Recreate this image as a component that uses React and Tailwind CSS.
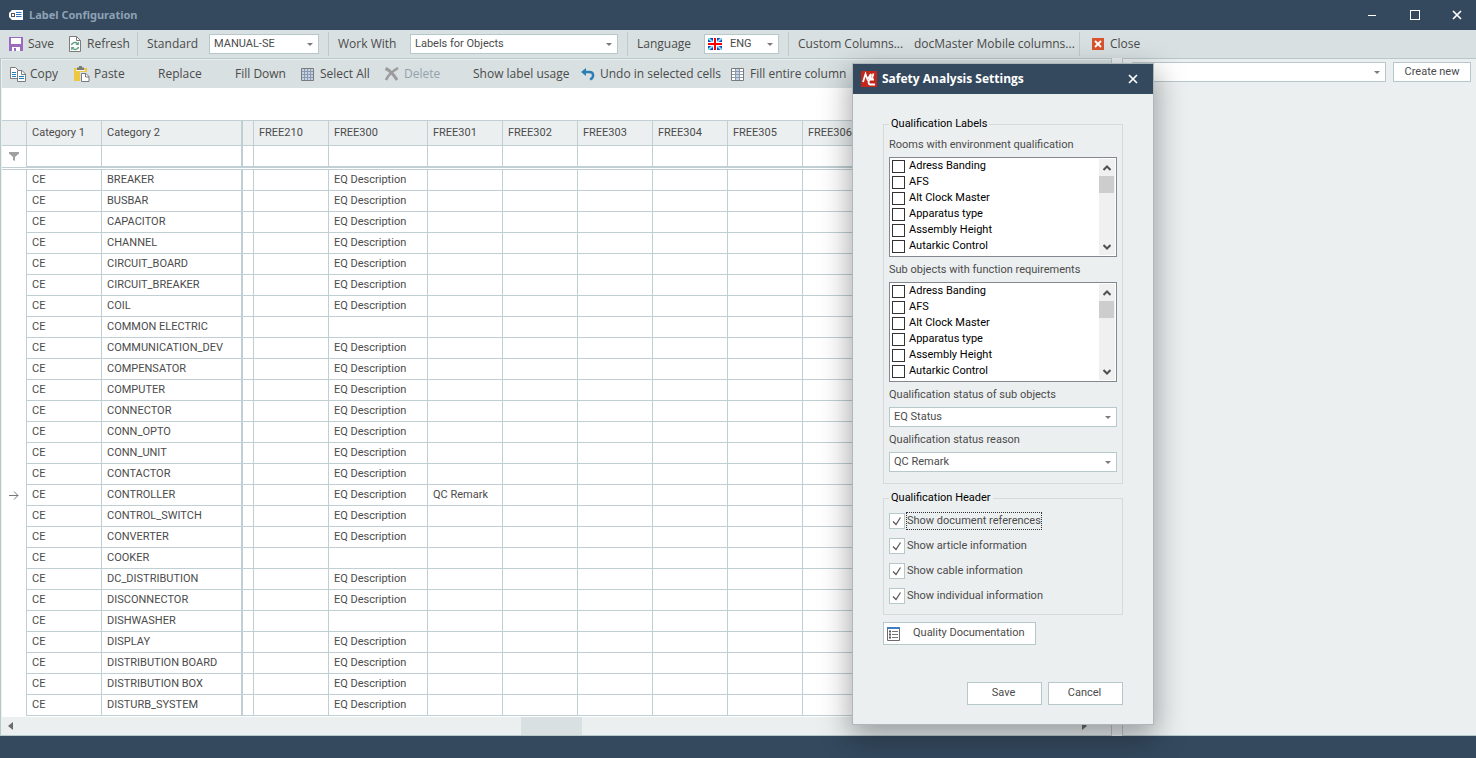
import { useState } from "react";
import clsx from "clsx";

const rows = [
  ["BREAKER", true],
  ["BUSBAR", true],
  ["CAPACITOR", true],
  ["CHANNEL", true],
  ["CIRCUIT_BOARD", true],
  ["CIRCUIT_BREAKER", true],
  ["COIL", true],
  ["COMMON ELECTRIC", false],
  ["COMMUNICATION_DEV", true],
  ["COMPENSATOR", true],
  ["COMPUTER", true],
  ["CONNECTOR", true],
  ["CONN_OPTO", true],
  ["CONN_UNIT", true],
  ["CONTACTOR", true],
  ["CONTROLLER", true],
  ["CONTROL_SWITCH", true],
  ["CONVERTER", true],
  ["COOKER", false],
  ["DC_DISTRIBUTION", true],
  ["DISCONNECTOR", true],
  ["DISHWASHER", false],
  ["DISPLAY", true],
  ["DISTRIBUTION BOARD", true],
  ["DISTRIBUTION BOX", true],
  ["DISTURB_SYSTEM", true],
];

const freeColumns = ["FREE301", "FREE302", "FREE303", "FREE304", "FREE305", "FREE306"];

const labelOptions = [
  "Adress Banding",
  "AFS",
  "Alt Clock Master",
  "Apparatus type",
  "Assembly Height",
  "Autarkic Control",
];

const headerOptions = [
  "Show document references",
  "Show article information",
  "Show cable information",
  "Show individual information",
];

function TagIcon() {
  return (
    <svg width="14" height="10" viewBox="0 0 14 10">
      <path d="M3 0h11v10H3L0 7V3z" fill="#fff" />
      <path d="M2 3h4v4H2z" fill="#555" />
      <path d="M3 4h2v2H3z" fill="#fff" />
      <path d="M7 2.500h5.500M7 4.500h5.500M7 6.500h5.500" stroke="#2f74c0" />
    </svg>
  );
}

function SaveIcon() {
  return (
    <svg width="14" height="14" viewBox="0 0 14 14">
      <path d="M0 0h14v14H0z" fill="#9b6bbf" />
      <path d="M2 1h10v6H2zM3 10h8v4H3z" fill="#fff" />
      <path d="M5 11h2v3H5z" fill="#9b6bbf" />
    </svg>
  );
}

function RefreshIcon() {
  return (
    <svg width="12" height="16" viewBox="0 0 12 16" fill="none">
      <path d="M0.500 0.500h7l4 4v11h-11z" fill="#fff" stroke="#7b7b7b" />
      <path d="M7.500 0.500v4h4" stroke="#7b7b7b" />
      <path d="M2.500 9a3.500 3 0 0 1 6-1.500M9.500 11a3.500 3 0 0 1-6 1.500" stroke="#5d9d80" strokeWidth="1.400" />
      <path d="M9.800 5.500v3.500H6.500zM2.200 14.500V11h3.300z" fill="#5d9d80" />
    </svg>
  );
}

function CopyIcon() {
  return (
    <svg width="16" height="15" viewBox="0 0 16 15" fill="none">
      <path d="M0.500 0.500h5l3 3v8h-8z" fill="#fff" stroke="#7b7b7b" />
      <path d="M2 5.500h4M2 7.500h4M2 9.500h4" stroke="#2380b5" />
      <path d="M7.500 3.500h4.500l3.500 3.500v7.500h-8z" fill="#fff" stroke="#7b7b7b" />
      <path d="M11.500 3.500v4h4" stroke="#7b7b7b" />
      <path d="M9 9.500h5M9 11.500h5" stroke="#2380b5" strokeWidth="1.200" />
    </svg>
  );
}

function PasteIcon() {
  return (
    <svg width="16" height="16" viewBox="0 0 16 16" fill="none">
      <path d="M0 2h13v13H0z" fill="#eec843" />
      <path d="M3 1.500h2V0h3v1.500h2V5H3z" fill="#7b7b7b" />
      <path d="M2 4h9v1H2z" fill="#fff" />
      <path d="M6 6h9v10H6z" fill="#d8e0e1" />
      <path d="M7.500 7.500h4.500l3 3v5h-7.500z" fill="#fff" stroke="#7b7b7b" />
      <path d="M11.500 7.500v3.500H15" stroke="#7b7b7b" />
    </svg>
  );
}

function GridIcon({ striped }) {
  return (
    <svg width="13" height="13" viewBox="0 0 13 13" fill="none">
      <path d="M0.500 0.500h12v12H0.500z" fill={striped ? "#fff" : "#c3d3e8"} stroke="#7b7b7b" />
      {striped && <path d="M5 1h4v11H5z" fill="#c3d3e8" />}
      <path
        d={striped ? "M1 3.500h11M1 6.500h11M1 9.500h11M4.500 1v11M8.500 1v11" : "M1 3.500h11M1 6.500h11M1 9.500h11M3.500 1v11M6.500 1v11M9.500 1v11"}
        stroke="#8d99a8"
      />
    </svg>
  );
}

function DeleteIcon() {
  return (
    <svg width="15" height="14" viewBox="0 0 15 14" fill="none" stroke="#9c9c9c">
      <path d="M1.500 1.500C5 3 10 8 13 13" strokeWidth="3" />
      <path d="M14 1C9 4 4 8 2 13" strokeWidth="2.500" />
    </svg>
  );
}

function UndoIcon() {
  return (
    <svg width="14" height="13" viewBox="0 0 14 13" fill="none">
      <path d="M0 4L5 0v8z" fill="#2d7fb3" />
      <path d="M4 4h4.500c4.500 0 5 5.500 0.500 7.500" stroke="#2d7fb3" strokeWidth="2.400" />
    </svg>
  );
}

function CloseIcon() {
  return (
    <svg width="12" height="12" viewBox="0 0 12 12">
      <path d="M0 0h12v12H0z" fill="#d9532c" />
      <path d="M3 3l6 6M9 3L3 9" stroke="#fff" strokeWidth="1.800" />
    </svg>
  );
}

function FlagIcon() {
  return (
    <svg width="14" height="12" viewBox="0 0 14 12">
      <path d="M0 0h14v12H0z" fill="#1546b8" />
      <path d="M0 0l14 12M14 0L0 12" stroke="#8fe0f5" strokeWidth="2" />
      <path d="M7 0v12M0 6h14" stroke="#fff" strokeWidth="4" />
      <path d="M7 0v12M0 6h14" stroke="#f00" strokeWidth="2" />
    </svg>
  );
}

function AppLogo() {
  return (
    <svg width="16" height="16" viewBox="0 0 16 16" fill="none">
      <path d="M0 0h16v16H0z" fill="#c3261b" />
      <path d="M2 11L4.500 3l2 5.500L10 3 9 9" stroke="#fff" strokeWidth="1.800" />
      <path d="M12.500 2.500L10.500 9M13 8.500H9c-2 1-2 5 0.500 5h4.500" stroke="#fff" strokeWidth="1.800" />
    </svg>
  );
}

function DocIcon() {
  return (
    <svg width="13" height="14" viewBox="0 0 13 14" fill="none">
      <path d="M0.500 0.500h12v13H0.500z" fill="#fff" stroke="#6b6b6b" />
      <path d="M0 0h13v2H0z" fill="#3f7fc1" />
      <path d="M2 4.500h2M2 7.500h2M2 10.500h2" stroke="#555" strokeWidth="2" />
      <path d="M5 4.500h6M5 7.500h6M5 10.500h6" stroke="#777" />
    </svg>
  );
}

function CrossIcon({ size = 10 }) {
  return (
    <svg width={size} height={size} viewBox="0 0 10 10">
      <path d="M1 1l8 8M9 1L1 9" stroke="#fff" strokeWidth="1.700" />
    </svg>
  );
}

function Combo({ label, value, className, icon }) {
  return (
    <div
      className={clsx(
        "relative flex h-5 items-center border border-[#b7c8cb] bg-white font-['Roboto',sans-serif] text-[11px]",
        className
      )}
    >
      {icon && <span className="ml-[3px] shrink-0">{icon}</span>}
      <select
        aria-label={label}
        defaultValue={value}
        className={clsx("h-full w-full appearance-none outline-none", icon ? "pl-2" : "pl-1")}
      >
        <option>{value}</option>
      </select>
      <svg className="pointer-events-none absolute right-[5px] top-2" width="6" height="3" viewBox="0 0 6 3">
        <path d="M0 0h6L3 3z" fill="#7b7b7b" />
      </svg>
    </div>
  );
}

function ToolButton({ icon, children, className, disabled }) {
  return (
    <button
      type="button"
      disabled={disabled}
      className={clsx("flex shrink-0 items-center whitespace-nowrap disabled:text-[#93a2ae]", className)}
    >
      {icon}
      {children}
    </button>
  );
}

function Separator() {
  return <div className="h-6 w-px shrink-0 bg-[#bccbce]" />;
}

function DialogButton({ children }) {
  return (
    <button type="button" className="h-[23px] w-[75px] border border-[#b7c8cb] bg-white pr-[2px]">
      {children}
    </button>
  );
}

function CheckList({ title }) {
  return (
    <div className="flex flex-col gap-1">
      <span className="h-4 leading-4">{title}</span>
      <div
        role="group"
        aria-label={title}
        className="flex h-[100px] justify-between border border-[#828790] bg-white px-px pb-px text-black"
      >
        <div className="flex flex-col">
          {labelOptions.map((option) => (
            <label key={option} className="flex h-4 items-center gap-1 pl-px leading-4">
              <input type="checkbox" className="size-[13px] appearance-none border border-[#333] bg-white checked:bg-[#333]" />
              {option}
            </label>
          ))}
        </div>
        <div className="mt-px flex w-4 flex-col items-center bg-[#f0f0f0]">
          <svg className="h-[17px]" width="8" height="17" viewBox="0 0 8 17" fill="none">
            <path d="M0.500 11L4 7.500 7.500 11" stroke="#505050" strokeWidth="2" />
          </svg>
          <div className="mr-px h-[17px] w-[15px] bg-[#cdcdcd]" />
          <svg className="mt-auto h-[17px]" width="8" height="17" viewBox="0 0 8 17" fill="none">
            <path d="M0.500 7L4 10.500 7.500 7" stroke="#505050" strokeWidth="2" />
          </svg>
        </div>
      </div>
    </div>
  );
}

function ComboField({ label, value }) {
  return (
    <div className="flex flex-col gap-1">
      <span className="h-4 leading-4">{label}</span>
      <Combo label={label} value={value} />
    </div>
  );
}

function SettingsDialog() {
  const [checked, setChecked] = useState(headerOptions);

  const toggle = (option) => {
    setChecked((prev) =>
      prev.includes(option) ? prev.filter((o) => o !== option) : [...prev, option]
    );
  };

  return (
    <div
      role="dialog"
      aria-label="Safety Analysis Settings"
      className="absolute left-[852px] top-[63px] w-[302px] border border-[#aeb8ba] bg-[#ebeff0] font-['Roboto',sans-serif] text-[11px] shadow-[0_10px_28px_2px_rgba(0,0,0,0.35)]"
    >
      <div className="flex h-[30px] items-center gap-[5px] bg-[#34495e] pl-2 text-white">
        <AppLogo />
        <h2 className="font-['Open_Sans',sans-serif] text-[12px] font-bold">Safety Analysis Settings</h2>
        <button type="button" aria-label="Close dialog" className="ml-auto mr-[15px]">
          <CrossIcon />
        </button>
      </div>

      <div className="flex flex-col px-[30px] pb-[19px] pt-[23px]">
        <fieldset className="border border-[#d5dadb] px-[5px] pb-[11px]">
          <legend className="px-[2px] leading-[14px] text-black">Qualification Labels</legend>
          <div className="flex flex-col gap-[5px] pt-[6px]">
            <CheckList title="Rooms with environment qualification" />
            <CheckList title="Sub objects with function requirements" />
            <ComboField label="Qualification status of sub objects" value="EQ Status" />
            <ComboField label="Qualification status reason" value="QC Remark" />
          </div>
        </fieldset>

        <fieldset className="mt-[7px] border border-[#d5dadb] px-[5px] pb-[10px]">
          <legend className="px-[2px] leading-[14px] text-black">Qualification Header</legend>
          <div className="flex flex-col items-start gap-[9px] pt-2">
            {headerOptions.map((option, index) => (
              <label key={option} className="flex h-4 items-center gap-[2px]">
                <span className="grid size-4">
                  <input
                    type="checkbox"
                    checked={checked.includes(option)}
                    onChange={() => toggle(option)}
                    className="peer col-start-1 row-start-1 size-4 appearance-none border border-[#b7c8cb] bg-white"
                  />
                  <svg
                    className="pointer-events-none invisible col-start-1 row-start-1 peer-checked:visible"
                    width="16"
                    height="16"
                    viewBox="0 0 16 16"
                    fill="none"
                  >
                    <path d="M4 8.500L7 11.500 11.500 4.500" stroke="#555" strokeWidth="1.200" />
                  </svg>
                </span>
                <span className={clsx("leading-4", index === 0 && "outline-1 outline-dotted outline-[#333]")}>
                  {option}
                </span>
              </label>
            ))}
          </div>
        </fieldset>

        <button
          type="button"
          className="mt-[7px] flex h-[23px] w-[153px] items-center gap-[13px] border border-[#b7c8cb] bg-white pl-[3px]"
        >
          <DocIcon />
          Quality Documentation
        </button>

        <div className="mt-[37px] flex justify-end gap-[6px]">
          <DialogButton>Save</DialogButton>
          <DialogButton>Cancel</DialogButton>
        </div>
      </div>
    </div>
  );
}

function LabelGrid() {
  const cell = "border-b border-r border-[#bfcfd3]";

  return (
    <div className="min-h-0 flex-1 overflow-hidden bg-white pt-8 font-['Roboto',sans-serif] text-[11px]">
      <table className="w-full table-fixed border-separate border-spacing-0 border-t border-[#bfcfd3] text-left">
        <colgroup>
          <col className="w-[25px]" />
          <col className="w-[75px]" />
          <col className="w-[141px]" />
          <col className="w-[11px]" />
          <col className="w-[75px]" />
          <col className="w-[99px]" />
          {freeColumns.map((name) => (
            <col key={name} className="w-[75px]" />
          ))}
          <col />
        </colgroup>
        <thead>
          <tr className="h-[25px] bg-[#ebeff0]">
            <th className={cell} />
            <th className={clsx(cell, "pl-[5px] font-normal")}>Category 1</th>
            <th className={clsx(cell, "border-r-2 pl-[5px] font-normal")}>Category 2</th>
            <th className={cell} />
            <th className={clsx(cell, "pl-[5px] font-normal")}>FREE210</th>
            <th className={clsx(cell, "pl-[5px] font-normal")}>FREE300</th>
            {freeColumns.map((name) => (
              <th key={name} className={clsx(cell, "pl-[5px] font-normal")}>
                {name}
              </th>
            ))}
            <th className={cell} />
          </tr>
          <tr className="h-[22px]">
            <td className={cell}>
              <svg className="mx-auto" width="10" height="9" viewBox="0 0 10 9">
                <path d="M0 0h10v1.500L6 5v4L4 8V5L0 1.500z" fill="#a0a0a0" />
              </svg>
            </td>
            {["Category 1", "Category 2", "", "FREE210", "FREE300", ...freeColumns, ""].map((name, index) => (
              <td key={index} className={clsx(cell, "border-b-2 p-0", index === 1 && "border-r-2")}>
                {name && <input aria-label={`Filter ${name}`} className="block h-5 w-full px-1 outline-none" />}
              </td>
            ))}
          </tr>
          <tr className="h-[2px]">
            <td colSpan={13} className="border-b border-[#bfcfd3] p-0" />
          </tr>
        </thead>
        <tbody>
          {rows.map(([category, described]) => (
            <tr key={category} className="h-[21px]">
              <td className="border-r border-[#bfcfd3] p-0">
                {category === "CONTROLLER" && (
                  <svg className="mx-auto" width="10" height="9" viewBox="0 0 10 9" fill="none" stroke="#777">
                    <path d="M0 4.500h9M5 0.500l4 4-4 4" />
                  </svg>
                )}
              </td>
              <td className={clsx(cell, "py-0 pl-[5px]")}>CE</td>
              <td className={clsx(cell, "border-r-2 py-0 pl-[5px]")}>{category}</td>
              <td className={cell} />
              <td className={cell} />
              <td className={clsx(cell, "py-0 pl-[5px]")}>{described && "EQ Description"}</td>
              {freeColumns.map((name) => (
                <td key={name} className={clsx(cell, "py-0 pl-[5px]")}>
                  {name === "FREE301" && category === "CONTROLLER" && "QC Remark"}
                </td>
              ))}
              <td className={cell} />
            </tr>
          ))}
        </tbody>
      </table>
    </div>
  );
}

export default function App() {
  return (
    <div className="relative flex h-screen flex-col overflow-hidden bg-[#34495e] font-['Open_Sans',sans-serif] text-[12px] text-[#4b4b4b]">
      <header className="flex h-[30px] shrink-0 items-center gap-[6px] pl-[9px]">
        <TagIcon />
        <h1 className="font-['Noto_Sans',sans-serif] text-[11px] font-bold text-[#8ea2b5]">
          Label Configuration
        </h1>
        <div className="ml-auto flex items-center gap-8 pr-[14px]">
          <button type="button" aria-label="Minimize" className="flex size-[10px] items-center">
            <span className="h-px w-2 bg-white" />
          </button>
          <button type="button" aria-label="Maximize" className="size-[10px] border border-white" />
          <button type="button" aria-label="Close window">
            <CrossIcon />
          </button>
        </div>
      </header>

      <div className="flex h-7 shrink-0 items-center bg-[#d8e0e1]">
        <ToolButton className="w-[61px] gap-[5px] pl-[9px]" icon={<SaveIcon />}>
          Save
        </ToolButton>
        <ToolButton className="ml-2 w-[68px] gap-[6px]" icon={<RefreshIcon />}>
          Refresh
        </ToolButton>
        <Separator />
        <span className="w-[71px] shrink-0 pl-[9px]">Standard</span>
        <Combo label="Standard" value="MANUAL-SE" className="w-[110px]" />
        <div className="w-[9px] shrink-0" />
        <Separator />
        <span className="w-[81px] shrink-0 pl-[9px]">Work With</span>
        <Combo label="Work With" value="Labels for Objects" className="w-[208px]" />
        <div className="w-[9px] shrink-0" />
        <Separator />
        <span className="w-[76px] shrink-0 pl-[9px]">Language</span>
        <Combo label="Language" value="ENG" className="w-[75px]" icon={<FlagIcon />} />
        <div className="w-[9px] shrink-0" />
        <Separator />
        <ToolButton className="w-[125px] pl-[9px]">Custom Columns...</ToolButton>
        <ToolButton className="w-[165px]">docMaster Mobile columns...</ToolButton>
        <Separator />
        <ToolButton className="gap-[6px] pl-3" icon={<CloseIcon />}>
          Close
        </ToolButton>
      </div>

      <main className="flex min-h-0 flex-1 gap-[10px] bg-[#ebeff0]">
        <section className="flex min-w-0 flex-1 flex-col border border-[#b7c8cb] pl-px">
          <div className="mt-px flex h-7 shrink-0 items-center bg-[#d8e0e1] pl-2">
            <ToolButton className="w-16 gap-1" icon={<CopyIcon />}>
              Copy
            </ToolButton>
            <ToolButton className="w-[84px] gap-1" icon={<PasteIcon />}>
              Paste
            </ToolButton>
            <ToolButton className="w-[77px]">Replace</ToolButton>
            <ToolButton className="w-[66px]">Fill Down</ToolButton>
            <ToolButton className="w-[83px] gap-[6px]" icon={<GridIcon />}>
              Select All
            </ToolButton>
            <ToolButton className="w-[89px] gap-[5px]" icon={<DeleteIcon />} disabled>
              Delete
            </ToolButton>
            <ToolButton className="w-[108px]">Show label usage</ToolButton>
            <ToolButton className="w-[150px] gap-[5px]" icon={<UndoIcon />}>
              Undo in selected cells
            </ToolButton>
            <ToolButton className="gap-[6px]" icon={<GridIcon striped />}>
              Fill entire column
            </ToolButton>
          </div>

          <LabelGrid />

          <div className="flex h-[18px] shrink-0 items-center justify-between pl-[6px] pr-6">
            <svg width="5" height="8" viewBox="0 0 5 8">
              <path d="M5 0v8L0 4z" fill="#6b6b6b" />
            </svg>
            <div className="ml-2 h-full w-[61px] bg-[#d8e0e1]" />
            <svg width="5" height="8" viewBox="0 0 5 8">
              <path d="M0 0v8l5-4z" fill="#6b6b6b" />
            </svg>
          </div>
        </section>

        <aside className="w-[354px] shrink-0 border-y border-l border-[#b7c8cb]">
          <div className="flex gap-[7px] pl-[9px] pr-[5px] pt-[3px]">
            <Combo label="Configuration" value="" className="flex-1" />
            <button
              type="button"
              className="h-5 w-[78px] border border-[#b7c8cb] bg-white font-['Roboto',sans-serif] text-[11px]"
            >
              Create new
            </button>
          </div>
        </aside>
      </main>

      <footer className="h-[22px] shrink-0 bg-[#34495e]" />

      <SettingsDialog />
    </div>
  );
}
